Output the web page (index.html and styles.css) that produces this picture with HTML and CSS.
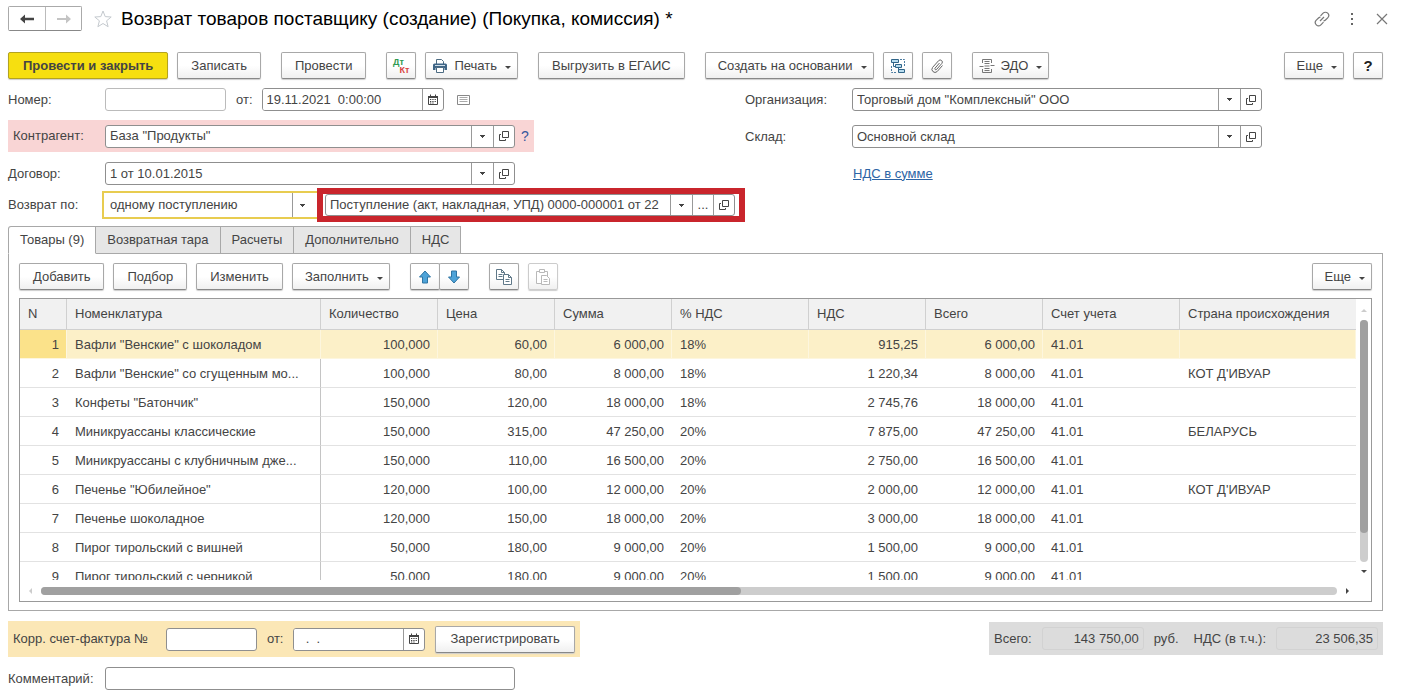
FILE: index.html
```html
<!DOCTYPE html>
<html lang="ru">
<head>
    <meta charset="UTF-8">
    <meta name="viewport" content="width=device-width, initial-scale=1.0">
    <title>Возврат товаров поставщику (создание)</title>
    <link rel="stylesheet" href="styles.css">
</head>
<body>
    <!-- Shared icons -->
    <svg class="sprite" aria-hidden="true">
        <symbol id="i-open" viewBox="0 0 12 12">
            <path d="M4.5 1.5h6v6h-6z M3 4.5H1.5v6h6V9" fill="none" stroke="#444"/>
        </symbol>
        <symbol id="i-calendar" viewBox="0 0 12 12">
            <path d="M1.5 2.5h9v8h-9z" fill="none" stroke="#444"/>
            <path d="M1 2h10v2H1z M3 .5h1V2H3z M8 .5h1V2H8z" fill="#444"/>
            <path d="M3 5.500h6 M3 7.500h6 M3 9h4" stroke="#444" stroke-dasharray="1.300 1"/>
        </symbol>
    </svg>

    <header class="titlebar">
        <div class="nav">
            <button type="button" aria-label="Назад"><svg width="14" height="10" viewBox="0 0 14 10"><path d="M0 5l5-4.500v3.200h9v2.600H5v3.200z" fill="#444"/></svg></button>
            <button type="button" aria-label="Вперед"><svg width="14" height="10" viewBox="0 0 14 10"><path d="M14 5L9 .5v3.500H0v2h9v3.500z" fill="#c4c4c4"/></svg></button>
        </div>
        <button type="button" class="plain star" aria-label="В избранное"><svg width="18" height="18" viewBox="0 0 18 18"><path d="M9 1l2.200 5.600 6 .4-4.600 3.800 1.500 5.900L9 13.500l-5.100 3.200 1.500-5.900L.8 7l6-.4z" fill="#fff" stroke="#c4c9ce"/></svg></button>
        <h1>Возврат товаров поставщику (создание) (Покупка, комиссия) *</h1>
        <div class="window-tools">
            <button type="button" class="plain" aria-label="Ссылка"><svg width="16" height="16" viewBox="0 0 16 16" fill="none" stroke="#777" stroke-width="1.200"><path d="M6.500 4.800l2.600-2.600a3.200 3.200 0 0 1 4.600 4.600l-2.200 2.200a3 3 0 0 1-2 .9 M9.500 11.200l-2.600 2.600a3.200 3.200 0 0 1-4.600-4.600l2.200-2.200a3 3 0 0 1 2-.9 M6 10l4-4"/></svg></button>
            <button type="button" class="plain" aria-label="Меню"><svg width="16" height="16" viewBox="0 0 16 16" fill="#666"><path d="M7 2h2v2H7z M7 7h2v2H7z M7 12h2v2H7z"/></svg></button>
            <button type="button" class="plain" aria-label="Закрыть"><svg width="16" height="16" viewBox="0 0 16 16"><path d="M3 3l10 10 M13 3L3 13" stroke="#777" stroke-width="1.200"/></svg></button>
        </div>
    </header>

    <div class="toolbar">
        <div class="group">
            <button type="button" class="btn primary">Провести и закрыть</button>
            <button type="button" class="btn">Записать</button>
        </div>
        <button type="button" class="btn">Провести</button>
        <div class="group">
            <button type="button" class="btn square dtkt" aria-label="Проводки"><span class="dt">Дт</span><span class="kt">Кт</span></button>
            <button type="button" class="btn menu with-icon"><svg width="16" height="16" viewBox="0 0 16 16"><path d="M4.500 6V1.500h5l2 2V6" fill="#fff" stroke="#4c6b82"/><path d="M1 7q0-1.500 1.500-1.500h11Q15 5.500 15 7v5h-2.500v-2h-9v2H1z" fill="#3f6687"/><path d="M4.500 9.500h7v5h-7z" fill="#fff" stroke="#4c6b82"/><path d="M3 7.500h10" stroke="#cfdde8"/></svg>Печать</button>
        </div>
        <button type="button" class="btn">Выгрузить в ЕГАИС</button>
        <div class="group">
            <button type="button" class="btn menu">Создать на основании</button>
            <button type="button" class="btn square" aria-label="Структура подчиненности"><svg width="16" height="16" viewBox="0 0 16 16"><path d="M1.500 8v6.500H6 M10 1.500h4.500V8" fill="none" stroke="#4b7ba0" stroke-dasharray="2 1"/><path d="M3.500 5v3.500H6 M8.500 10v3H10" fill="none" stroke="#2f6488"/><path d="M1.500 1.500h7v3h-7z M5.500 6.500h6v3h-6z M8.500 11.500h6v3h-6z" fill="#b9dcee" stroke="#2f6488"/></svg></button>
            <button type="button" class="btn square" aria-label="Файлы"><svg width="16" height="16" viewBox="0 0 16 16"><path d="M10.500 5L6 10.200a1 1 0 0 0 1.500 1.300l5.300-6a2.100 2.100 0 0 0-3.200-2.800L3.500 9.500a3.100 3.100 0 0 0 4.600 4.100L13.500 7.500" fill="none" stroke="#666"/></svg></button>
        </div>
        <button type="button" class="btn menu with-icon"><svg width="16" height="16" viewBox="0 0 16 16" fill="none" stroke="#777"><path d="M3.500 5V1.500h9V5 M3.500 11v3.500h9V11 M5.500 3.500h5 M5.500 5.500h5 M5.500 10.500h5 M5.500 12.500h5 M.5 8.500h4 M11.500 7.500h4 M5.500 8h5"/></svg>ЭДО</button>
        <div class="group last">
            <button type="button" class="btn menu">Еще</button>
            <button type="button" class="btn square help">?</button>
        </div>
    </div>

    <form class="fields">
        <div class="left">
            <div class="row">
                <label for="number">Номер:</label>
                <input type="text" id="number" class="box pale">
                <label for="date" class="from">от:</label>
                <div class="box date">
                    <input type="text" id="date" value="19.11.2021  0:00:00">
                    <button type="button" aria-label="Выбрать дату"><svg width="12" height="12"><use href="#i-calendar"/></svg></button>
                </div>
                <button type="button" class="plain list" aria-label="Режим"><svg width="14" height="12" viewBox="0 0 14 12" fill="none"><path d="M.5 1.500h12v9H.5z" stroke="#888"/><path d="M2.500 3.500h8 M2.500 5.500h8 M2.500 7.500h8" stroke="#aaa"/></svg></button>
            </div>
            <div class="row required">
                <label for="partner">Контрагент:</label>
                <div class="box combo">
                    <span class="pick"><select id="partner"><option>База "Продукты"</option></select></span>
                    <button type="button" aria-label="Открыть"><svg width="12" height="12"><use href="#i-open"/></svg></button>
                </div>
                <a href="#" class="hint">?</a>
            </div>
            <div class="row">
                <label for="contract">Договор:</label>
                <div class="box combo">
                    <span class="pick"><select id="contract"><option>1 от 10.01.2015</option></select></span>
                    <button type="button" aria-label="Открыть"><svg width="12" height="12"><use href="#i-open"/></svg></button>
                </div>
            </div>
            <div class="row return">
                <label for="return-by">Возврат по:</label>
                <div class="box focused">
                    <span class="pick"><select id="return-by"><option>одному поступлению</option></select></span>
                </div>
                <div class="marked">
                    <div class="box combo">
                        <span class="pick"><select aria-label="Документ поступления"><option>Поступление (акт, накладная, УПД) 0000-000001 от 22</option></select></span>
                        <button type="button" aria-label="Выбрать">...</button>
                        <button type="button" aria-label="Открыть"><svg width="12" height="12"><use href="#i-open"/></svg></button>
                    </div>
                </div>
            </div>
        </div>
        <div class="right">
            <div class="row">
                <label for="company">Организация:</label>
                <div class="box combo">
                    <span class="pick"><select id="company"><option>Торговый дом "Комплексный" ООО</option></select></span>
                    <button type="button" aria-label="Открыть"><svg width="12" height="12"><use href="#i-open"/></svg></button>
                </div>
            </div>
            <div class="row">
                <label for="store">Склад:</label>
                <div class="box combo">
                    <span class="pick"><select id="store"><option>Основной склад</option></select></span>
                    <button type="button" aria-label="Открыть"><svg width="12" height="12"><use href="#i-open"/></svg></button>
                </div>
            </div>
            <div class="row link-row"><a href="#">НДС в сумме</a></div>
        </div>
    </form>

    <nav class="tabs">
        <button type="button" class="active">Товары (9)</button>
        <button type="button">Возвратная тара</button>
        <button type="button">Расчеты</button>
        <button type="button">Дополнительно</button>
        <button type="button">НДС</button>
    </nav>

    <main class="panel">
        <div class="toolbar">
            <div class="group">
                <button type="button" class="btn">Добавить</button>
                <button type="button" class="btn">Подбор</button>
                <button type="button" class="btn">Изменить</button>
                <button type="button" class="btn menu">Заполнить</button>
            </div>
            <div class="arrows">
                <button type="button" class="btn square" aria-label="Вверх"><svg width="14" height="14" viewBox="0 0 14 14"><path d="M7 1l5.500 6H9.500v6h-5V7h-3z" fill="#4ea3d8" stroke="#2f75a3"/></svg></button>
                <button type="button" class="btn square" aria-label="Вниз"><svg width="14" height="14" viewBox="0 0 14 14"><path d="M7 13l5.500-6H9.500V1h-5v6h-3z" fill="#4ea3d8" stroke="#2f75a3"/></svg></button>
            </div>
            <div class="group">
                <button type="button" class="btn square" aria-label="Копировать"><svg width="16" height="16" viewBox="0 0 16 16" fill="#fff" stroke="#5f7888"><path d="M.5.500h5l3 3v7h-8z"/><path d="M5.500.5v3h3 M2.500 5.500h4 M2.500 7.500h4" fill="none"/><path d="M7.500 5.500h5l3 3v7h-8z"/><path d="M12.500 5.500v3h3 M9.500 10.500h4 M9.500 12.500h4" fill="none"/></svg></button>
                <button type="button" class="btn square" disabled aria-label="Вставить"><svg width="16" height="16" viewBox="0 0 16 16" fill="#fff" stroke="#b9b9b9"><path d="M1.500 2.500h11v12h-11z"/><path d="M4.500.500h5v3h-5z"/><path d="M6.500 6.500h5l3 3v6h-8z"/><path d="M8.500 10.500h4 M8.500 12.500h4"/></svg></button>
            </div>
            <div class="group last">
                <button type="button" class="btn menu">Еще</button>
            </div>
        </div>

        <div class="grid">
            <div class="viewport">
                <table>
                    <colgroup>
                        <col class="c-n"><col class="c-name"><col class="c-num"><col class="c-num"><col class="c-num"><col class="c-rate"><col class="c-num"><col class="c-num"><col class="c-rate"><col>
                    </colgroup>
                    <thead>
                        <tr><th>N</th><th>Номенклатура</th><th>Количество</th><th>Цена</th><th>Сумма</th><th>% НДС</th><th>НДС</th><th>Всего</th><th>Счет учета</th><th>Страна происхождения</th></tr>
                    </thead>
                    <tbody>
                        <tr class="selected"><td>1</td><td>Вафли "Венские" с шоколадом</td><td>100,000</td><td>60,00</td><td>6 000,00</td><td>18%</td><td>915,25</td><td>6 000,00</td><td>41.01</td><td></td></tr>
                        <tr><td>2</td><td>Вафли "Венские" со сгущенным мо...</td><td>100,000</td><td>80,00</td><td>8 000,00</td><td>18%</td><td>1 220,34</td><td>8 000,00</td><td>41.01</td><td>КОТ Д'ИВУАР</td></tr>
                        <tr><td>3</td><td>Конфеты "Батончик"</td><td>150,000</td><td>120,00</td><td>18 000,00</td><td>18%</td><td>2 745,76</td><td>18 000,00</td><td>41.01</td><td></td></tr>
                        <tr><td>4</td><td>Миникруассаны классические</td><td>150,000</td><td>315,00</td><td>47 250,00</td><td>20%</td><td>7 875,00</td><td>47 250,00</td><td>41.01</td><td>БЕЛАРУСЬ</td></tr>
                        <tr><td>5</td><td>Миникруассаны с клубничным дже...</td><td>150,000</td><td>110,00</td><td>16 500,00</td><td>20%</td><td>2 750,00</td><td>16 500,00</td><td>41.01</td><td></td></tr>
                        <tr><td>6</td><td>Печенье "Юбилейное"</td><td>120,000</td><td>100,00</td><td>12 000,00</td><td>20%</td><td>2 000,00</td><td>12 000,00</td><td>41.01</td><td>КОТ Д'ИВУАР</td></tr>
                        <tr><td>7</td><td>Печенье шоколадное</td><td>120,000</td><td>150,00</td><td>18 000,00</td><td>20%</td><td>3 000,00</td><td>18 000,00</td><td>41.01</td><td></td></tr>
                        <tr><td>8</td><td>Пирог тирольский с вишней</td><td>50,000</td><td>180,00</td><td>9 000,00</td><td>20%</td><td>1 500,00</td><td>9 000,00</td><td>41.01</td><td></td></tr>
                        <tr><td>9</td><td>Пирог тирольский с черникой</td><td>50,000</td><td>180,00</td><td>9 000,00</td><td>20%</td><td>1 500,00</td><td>9 000,00</td><td>41.01</td><td></td></tr>
                    </tbody>
                </table>
            </div>
            <div class="vscroll"><i class="up"></i><div class="track"><div class="thumb"></div></div><i class="down"></i></div>
            <div class="hscroll"><i class="prev"></i><div class="track"><div class="thumb"></div></div><i class="next"></i></div>
        </div>
    </main>

    <footer>
        <div class="invoice">
            <label for="invoice">Корр. счет-фактура №</label>
            <input type="text" id="invoice" class="box">
            <label for="invoice-date">от:</label>
            <div class="box date">
                <input type="text" id="invoice-date" value="  .  .">
                <button type="button" aria-label="Выбрать дату"><svg width="12" height="12"><use href="#i-calendar"/></svg></button>
            </div>
            <button type="button" class="btn wide">Зарегистрировать</button>
        </div>
        <div class="totals">
            <label for="total">Всего:</label>
            <input type="text" id="total" value="143 750,00" readonly>
            <span>руб.</span>
            <label for="vat">НДС (в т.ч.):</label>
            <input type="text" id="vat" value="23 506,35" readonly>
        </div>
    </footer>
    <div class="row comment">
        <label for="comment">Комментарий:</label>
        <input type="text" id="comment" class="box">
    </div>
</body>
</html>
```
FILE: styles.css
```css
* {
    box-sizing: border-box;
}
body {
    margin: 0;
    padding: 6px 20px 6px 8px;
    background-color: #fff;
    color: #444;
    font-family: "Liberation Sans", Arial, sans-serif;
    font-size: 13px;
    line-height: 16px;
}
button, input, select {
    font: inherit;
    color: inherit;
    margin: 0;
}
button svg {
    display: block;
    flex: none;
}
.sprite {
    display: none;
}
.plain {
    border: none;
    background: none;
    padding: 0;
}

/* Title */
.titlebar {
    display: flex;
    align-items: center;
    height: 25px;
    margin-right: -7px;
}
.nav {
    display: flex;
    border: 1px solid #aaa;
    border-bottom-color: #888;
    border-radius: 2px;
}
.nav button {
    display: flex;
    align-items: center;
    justify-content: center;
    width: 36px;
    height: 23px;
    padding: 0;
    border: none;
    background-color: #fff;
}
.nav button + button {
    border-left: 1px solid #bbb;
}
.star {
    margin: 0 9px 0 12px;
}
h1 {
    margin: 0;
    font-size: 19px;
    line-height: 24px;
    font-weight: normal;
    color: #000;
}
.window-tools {
    display: flex;
    gap: 14px;
    margin-left: auto;
}

/* Buttons */
.toolbar {
    display: flex;
    gap: 20px;
    margin-top: 21px;
}
.group {
    display: flex;
    gap: 9px;
}
.last {
    margin-left: auto;
}
.btn {
    display: flex;
    align-items: center;
    justify-content: center;
    gap: 6px;
    height: 27px;
    padding: 0 13px;
    border: 1px solid #a8a8a8;
    border-bottom-color: #888;
    border-radius: 2px;
    background: linear-gradient(#fff 50%, #f0f0f0);
    box-shadow: 0 1px 1px #ccc;
    white-space: nowrap;
}
.primary, .wide {
    padding: 0 14px;
}
.primary {
    background: #f6df10;
    border-color: #b3a320;
    font-weight: bold;
}
.menu {
    padding: 0 6px 0 12px;
}
.menu::after {
    content: "";
    margin: 4px 0 0 2px;
    border: 3px solid transparent;
    border-top-color: #444;
    border-bottom: none;
}
.with-icon {
    padding-left: 6px;
}
.square {
    width: 30px;
    padding: 0;
}
.square:disabled {
    border-color: #ccc;
}
.help {
    font-size: 15px;
    font-weight: bold;
    color: #222;
}
.dtkt {
    flex-direction: column;
    gap: 0;
    font-size: 9px;
    line-height: 8px;
    font-weight: bold;
}
.dt {
    color: #2f9a50;
    margin-right: 6px;
}
.kt {
    color: #d8453f;
    margin-left: 6px;
}

/* Fields */
.fields {
    display: grid;
    grid-template-columns: 737fr 638fr;
    margin-top: 9px;
}
.row {
    display: flex;
    align-items: center;
}
.row label {
    flex: none;
    width: 97px;
}
.box {
    display: flex;
    height: 23px;
    border: 1px solid #8f8f8f;
    border-radius: 3px;
    background-color: #fff;
    overflow: hidden;
}
input.box {
    padding: 0 4px;
}
.pale {
    width: 121px;
    border-color: #bbb;
}
.row .from {
    width: auto;
    margin: 0 9px 0 10px;
}
.date {
    width: 182px;
}
.date input {
    flex: 1;
    min-width: 0;
    padding: 0 4px;
    border: none;
    white-space: pre;
}
.box button {
    display: flex;
    flex: none;
    align-items: center;
    justify-content: center;
    width: 21px;
    padding: 0;
    border: none;
    border-left: 1px solid #999;
    background: none;
}
.list {
    margin-left: 13px;
}
.combo {
    width: 410px;
}
.pick {
    position: relative;
    display: flex;
    flex: 1;
    min-width: 0;
}
.pick select {
    appearance: none;
    width: 100%;
    padding: 0 21px 0 4px;
    border: none;
    background: none;
}
.pick::after {
    content: "";
    position: absolute;
    top: 0;
    right: 0;
    width: 21px;
    height: 100%;
    border-left: 1px solid #999;
    background: linear-gradient(#444, #444) center 9px / 5px 1px no-repeat,
        linear-gradient(#444, #444) center 10px / 3px 1px no-repeat,
        linear-gradient(#444, #444) center 11px / 1px 1px no-repeat;
    pointer-events: none;
}
.required {
    width: 526px;
    height: 32px;
    margin: 9px 0 10px;
    padding-left: 5px;
    background-color: #f9d5d5;
}
.required label {
    width: 92px;
}
.hint {
    margin-left: 6px;
    color: #35589c;
    font-size: 14px;
    text-decoration: none;
}
.return {
    height: 34px;
    margin-top: 3px;
}
.row.return label {
    width: 94px;
}
.focused {
    width: 215px;
    height: 28px;
    border: 2px solid #e8cc50;
    border-right: none;
    border-radius: 0;
}
.focused select {
    padding-left: 6px;
}
.focused .pick::after {
    width: 24px;
    background-position: 7px 11px, 8px 12px, 9px 13px;
}
.marked {
    border: 6px solid #c9252c;
    padding: 0 4px 0 2px;
}
.marked .box {
    height: 22px;
}
.right {
    display: flex;
    flex-direction: column;
    gap: 14px;
}
.right label {
    width: 107px;
}
.link-row {
    height: 23px;
    padding-left: 108px;
}
.link-row a {
    color: #2d64a5;
}

/* Tabs */
.tabs {
    display: flex;
    margin-top: 4px;
}
.tabs button {
    height: 28px;
    margin-left: -1px;
    padding: 0 11px;
    border: 1px solid #a8a8a8;
    background-color: #e6e6e6;
}
.tabs .active {
    position: relative;
    margin: 0;
    border-bottom-color: #fff;
    border-radius: 3px 0 0;
    background-color: #fff;
}
.panel {
    margin-top: -1px;
    padding: 9px 10px 8px;
    border: 1px solid #a8a8a8;
}
.panel .toolbar {
    margin: 0 0 8px;
}
.arrows {
    display: flex;
}
.arrows .btn + .btn {
    margin-left: -1px;
}

/* Items table */
.grid {
    display: grid;
    grid-template-columns: minmax(0, 1fr) 15px;
    border: 1px solid #999;
}
.viewport {
    height: 281px;
    overflow: hidden;
}
table {
    width: 100%;
    table-layout: fixed;
    border-collapse: separate;
    border-spacing: 0;
}
.c-n {
    width: 47px;
}
.c-name {
    width: 254px;
}
.c-num {
    width: 117px;
}
.c-rate {
    width: 137px;
}
th, td {
    height: 29px;
    padding: 1px 8px 0;
    border-bottom: 1px solid #e2e2e2;
    text-align: left;
    font-weight: normal;
    white-space: nowrap;
    overflow: hidden;
}
th {
    height: 31px;
    padding-top: 0;
    background-color: #f1f1f1;
    border-right: 1px solid #d0d0d0;
    border-bottom-color: #d0d0d0;
}
th:last-child {
    border-right: none;
}
td:nth-child(2) {
    border-right: 1px solid #c4c4c4;
}
td:nth-child(1), td:nth-child(3), td:nth-child(4), td:nth-child(5), td:nth-child(7), td:nth-child(8) {
    text-align: right;
}
.selected td {
    padding-right: 7px;
    background-color: #fcf0c8;
    border-right: 1px solid #fdf6de;
    border-bottom-color: #fdf6de;
}
.selected td:first-child {
    background-color: #fbe28a;
}
.track {
    flex: 1;
    border-radius: 4px;
    background-color: #cdcdcd;
}
.thumb {
    border-radius: 4px;
    background-color: #a0a0a0;
}
.vscroll {
    display: flex;
    flex-direction: column;
    align-items: center;
    padding: 10px 0 7px;
}
.vscroll .track {
    width: 8px;
    margin: 8px 0;
}
.vscroll .thumb {
    height: 88%;
}
.hscroll {
    display: flex;
    align-items: center;
    height: 21px;
    padding: 0 7px 0 9px;
}
.hscroll .track {
    height: 8px;
    margin: 0 9px;
}
.hscroll .thumb {
    width: 54%;
    height: 8px;
}
.grid i {
    border: 3px solid transparent;
}
.grid .up {
    border-top: none;
    border-bottom-color: #ccc;
}
.grid .down {
    border-bottom: none;
    border-top-color: #444;
}
.grid .prev {
    border-left: none;
    border-right-color: #ccc;
}
.grid .next {
    border-right: none;
    border-left-color: #444;
}

/* Footer */
footer {
    display: flex;
    justify-content: space-between;
    margin: 10px 0;
}
.invoice, .totals {
    display: flex;
    align-items: center;
    padding: 0 5px;
}
.invoice {
    gap: 10px;
    height: 36px;
    background-color: #fbe7b6;
}
.invoice input.box {
    width: 91px;
    margin-left: 8px;
}
.invoice .date {
    width: 132px;
}
.totals {
    gap: 10px;
    height: 33px;
    margin-top: 1px;
    background-color: #dcdcdc;
}
.totals input {
    width: 102px;
    height: 23px;
    padding: 0 4px;
    border: 1px solid #d2d2d2;
    border-radius: 3px;
    background: none;
    text-align: right;
}
.totals span {
    margin-right: 5px;
}
.comment .box {
    width: 410px;
}
```
